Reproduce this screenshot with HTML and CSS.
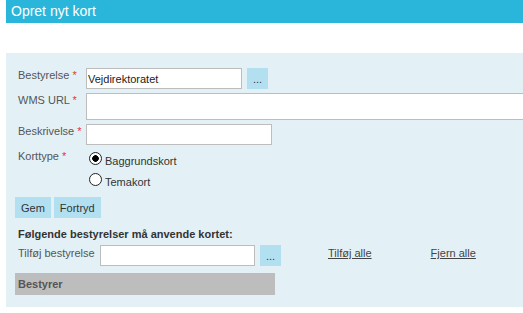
FILE: index.html
```html
<!DOCTYPE html>
<html>
<head>
<meta charset="utf-8">
<link rel="stylesheet" href="styles.css">
</head>
<body>
<div class="header">Opret nyt kort</div>
<div class="panel">
  <div class="form">
    <label class="lbl">Bestyrelse <span class="req">*</span></label>
    <div class="field">
      <input class="txt w156" type="text" value="Vejdirektoratet">
      <button class="btn dots">...</button>
    </div>
    <label class="lbl">WMS URL <span class="req">*</span></label>
    <div class="field">
      <input class="txt wide" type="text">
    </div>
    <label class="lbl">Beskrivelse <span class="req">*</span></label>
    <div class="field">
      <input class="txt w186" type="text">
    </div>
    <label class="lbl">Korttype <span class="req">*</span></label>
    <div class="radios">
      <label class="radio"><input type="radio" name="kt" checked><span>Baggrundskort</span></label>
      <label class="radio"><input type="radio" name="kt"><span>Temakort</span></label>
    </div>
  </div>
  <div class="actions">
    <button class="btn">Gem</button>
    <button class="btn">Fortryd</button>
  </div>
  <div class="subhead">Følgende bestyrelser må anvende kortet:</div>
  <div class="addrow">
    <label class="lbl2">Tilføj bestyrelse</label>
    <input class="txt w155" type="text">
    <button class="btn dots">...</button>
    <a class="link l1" href="#">Tilføj alle</a>
    <a class="link l2" href="#">Fjern alle</a>
  </div>
  <div class="gridhead">Bestyrer</div>
</div>
</body>
</html>
```

FILE: styles.css
```css
html, body {
  margin: 0;
  padding: 0;
  overflow: hidden;
  background: #ffffff;
}
body {
  padding-left: 6px;
  font-family: "Liberation Sans", Arial, sans-serif;
  font-size: 11px;
  color: #555555;
}
.header {
  height: 23px;
  line-height: 23px;
  background: #2ab6da;
  color: #ffffff;
  font-size: 14px;
  padding-left: 5px;
}
.panel {
  margin-top: 30px;
  background: #e3f1f6;
  padding: 15px 0 12px 9px;
  overflow: hidden;
}
.form {
  display: grid;
  grid-template-columns: 68px 1fr;
  row-gap: 4px;
  margin-left: 3px;
}
.lbl {
  line-height: 14px;
  color: #555555;
}
.req {
  color: #e5372f;
}
.field {
  display: flex;
  align-items: flex-start;
}
.txt {
  box-sizing: border-box;
  height: 21px;
  border: 1px solid #bdbdbd;
  background: #ffffff;
  font-family: "Liberation Sans", Arial, sans-serif;
  font-size: 11px;
  color: #222222;
  padding: 0 1px;
  margin: 0;
  outline: none;
}
.w156 { width: 156px; }
.w186 { width: 186px; }
.w155 { width: 155px; }
.wide { width: 480px; height: 27px; }
.btn {
  box-sizing: border-box;
  height: 21px;
  border: none;
  background: #b3e0f0;
  font-family: "Liberation Sans", Arial, sans-serif;
  font-size: 11px;
  color: #333333;
  padding: 0 6px;
  margin: 0;
}
.dots {
  width: 21px;
  padding: 0;
  margin-left: 5px;
}
.radios {
  display: flex;
  flex-direction: column;
}
.radio {
  display: flex;
  align-items: flex-start;
  height: 21px;
  color: #333333;
}
.radio input {
  appearance: none;
  -webkit-appearance: none;
  box-sizing: border-box;
  width: 13px;
  height: 13px;
  margin: 3px 3px 0 3px;
  border: 1px solid #222222;
  border-radius: 50%;
  background: #ffffff;
}
.radio input:checked {
  background: radial-gradient(circle, #000000 0 3px, #ffffff 3.6px);
}
.radio span {
  padding-top: 5px;
  line-height: 14px;
}
.actions {
  display: flex;
  gap: 3px;
  margin-top: 6px;
}
.subhead {
  margin: 9px 0 0 3px;
  line-height: 14px;
  font-weight: bold;
  color: #333333;
}
.addrow {
  display: flex;
  align-items: flex-start;
  margin: 4px 0 0 3px;
}
.lbl2 {
  width: 82px;
  padding-top: 1px;
  line-height: 14px;
  color: #555555;
}
.link {
  color: #444444;
  text-decoration: underline;
  line-height: 14px;
  padding-top: 1px;
}
.l1 { margin-left: 47px; }
.l2 { margin-left: 59px; }
.gridhead {
  margin-top: 7px;
  width: 257px;
  height: 22px;
  line-height: 22px;
  padding-left: 3px;
  background: #bdbdbd;
  font-weight: bold;
  color: #555555;
}
```
